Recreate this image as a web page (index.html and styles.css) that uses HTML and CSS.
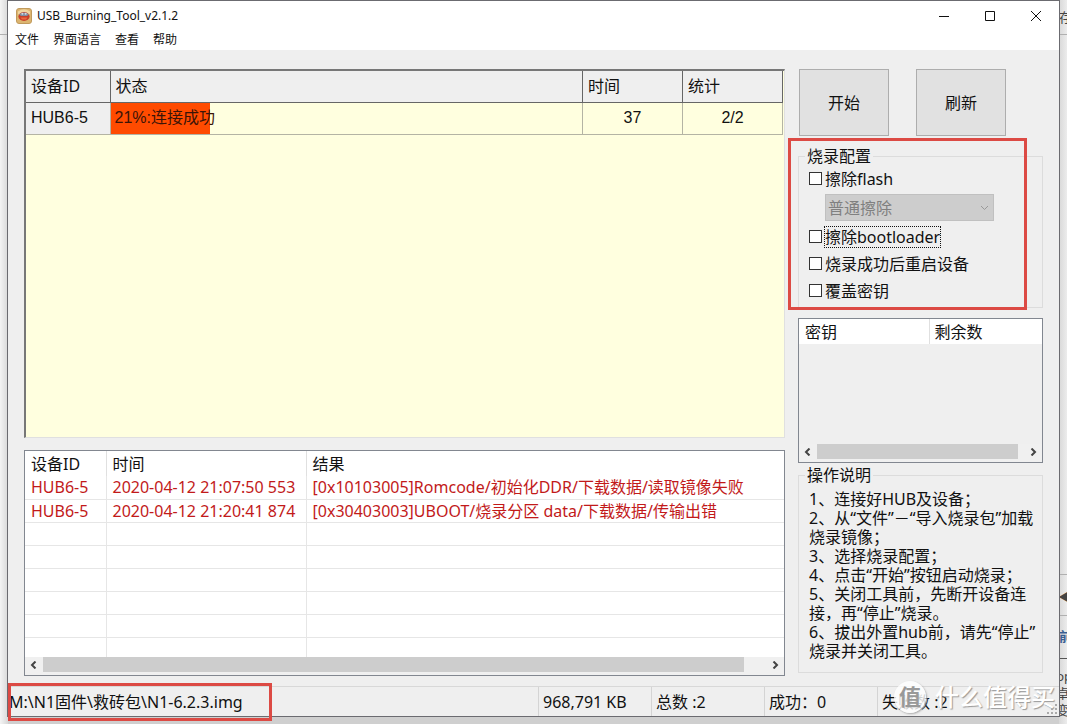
FILE: index.html
```html
<!DOCTYPE html>
<html lang="zh-CN">
<head>
<meta charset="utf-8">
<title>USB_Burning_Tool_v2.1.2</title>
<link rel="stylesheet" href="styles.css">
</head>
<body>
<div class="desktop" aria-hidden="true">
  <span class="bit bit-top">存戏</span>
  <span class="bit rule rule-left"></span>
  <span class="bit rule rule-right"></span>
  <span class="bit arrow-panel">◀</span>
  <span class="bit bit-link">前</span>
  <span class="bit rule rule-dark"></span>
  <span class="bit bit-app">op<br>卓<br>变</span>
  <span class="bit sheet"></span>
</div>

<div class="window">
  <header class="titlebar">
    <svg class="app-icon" viewBox="0 0 16 16" width="16" height="16">
      <rect x="0.5" y="0.5" width="15" height="15" rx="2.5" fill="#dcb570" stroke="#c09a5c"/>
      <path d="M2 3.5Q8 -1 14 3.5V6H2Z" fill="#f0d6a0"/>
      <ellipse cx="8" cy="8.5" rx="5.6" ry="4.4" fill="#c8402a"/>
      <path d="M3 6.5Q8 2.5 13 6.5L11 8H5Z" fill="#7e8fa3"/>
      <circle cx="6.4" cy="5.8" r="1" fill="#d4dbe0"/><circle cx="9.6" cy="5.8" r="1" fill="#d4dbe0"/>
      <path d="M4.5 9.5H11.5L10 11.5H6Z" fill="#ec6a40"/>
    </svg>
    <h1 class="title">USB_Burning_Tool_v2.1.2</h1>
    <button class="win-btn" aria-label="最小化"><svg viewBox="0 0 12 12" width="12" height="12"><path d="M1 6.5H11"/></svg></button>
    <button class="win-btn" aria-label="最大化"><svg viewBox="0 0 12 12" width="12" height="12"><path d="M1.5 1.5H10.5V10.5H1.5Z"/></svg></button>
    <button class="win-btn" aria-label="关闭"><svg viewBox="0 0 12 12" width="12" height="12"><path d="M1 1L11 11M11 1L1 11"/></svg></button>
  </header>
  <nav class="menu">
    <button>文件</button><button>界面语言</button><button>查看</button><button>帮助</button>
  </nav>

  <main class="content">
    <section class="left">
      <div class="devices">
        <table class="device-table">
          <colgroup><col class="c-id"><col><col class="c-num"><col class="c-num"></colgroup>
          <thead><tr><th>设备ID</th><th>状态</th><th>时间</th><th>统计</th></tr></thead>
          <tbody><tr>
            <td class="id">HUB6-5</td>
            <td class="progress"><div class="bar" style="width: 21%"></div><span class="status">21%:连接成功</span></td>
            <td class="num">37</td><td class="num">2/2</td>
          </tr></tbody>
        </table>
      </div>
      <div class="log">
        <table class="log-table">
          <colgroup><col class="l-id"><col class="l-time"><col></colgroup>
          <thead><tr><th>设备ID</th><th>时间</th><th>结果</th></tr></thead>
          <tbody>
            <tr><td>HUB6-5</td><td>2020-04-12 21:07:50 553</td><td>[0x10103005]Romcode/初始化DDR/下载数据/读取镜像失败</td></tr>
            <tr><td>HUB6-5</td><td>2020-04-12 21:20:41 874</td><td>[0x30403003]UBOOT/烧录分区 data/下载数据/传输出错</td></tr>
            <tr><td></td><td></td><td></td></tr>
            <tr><td></td><td></td><td></td></tr>
            <tr><td></td><td></td><td></td></tr>
            <tr><td></td><td></td><td></td></tr>
            <tr><td></td><td></td><td></td></tr>
            <tr class="last"><td></td><td></td><td></td></tr>
          </tbody>
        </table>
        <div class="scroll">
          <button aria-label="向左"><svg viewBox="0 0 8 8" width="8" height="8"><path d="M5.5 0.5L2 4L5.5 7.5"/></svg></button>
          <div class="track"><div class="thumb"></div></div>
          <button aria-label="向右"><svg viewBox="0 0 8 8" width="8" height="8"><path d="M2.5 0.5L6 4L2.5 7.5"/></svg></button>
        </div>
      </div>
    </section>

    <section class="right">
      <div class="actions"><button>开始</button><button>刷新</button></div>

      <div class="config">
        <fieldset class="group">
          <legend>烧录配置</legend>
          <label class="check"><input type="checkbox"><span>擦除flash</span></label>
          <select class="mode" disabled aria-label="擦除方式"><option>普通擦除</option></select>
          <label class="check"><input type="checkbox"><span class="focused">擦除bootloader</span></label>
          <label class="check"><input type="checkbox"><span>烧录成功后重启设备</span></label>
          <label class="check"><input type="checkbox"><span>覆盖密钥</span></label>
        </fieldset>
        <div class="mark mark-config"></div>
      </div>

      <div class="keys">
        <table class="key-table">
          <thead><tr><th>密钥</th><th>剩余数</th></tr></thead>
        </table>
        <div class="scroll">
          <button aria-label="向左"><svg viewBox="0 0 8 8" width="8" height="8"><path d="M5.5 0.5L2 4L5.5 7.5"/></svg></button>
          <div class="track"><div class="thumb"></div></div>
          <button aria-label="向右"><svg viewBox="0 0 8 8" width="8" height="8"><path d="M2.5 0.5L6 4L2.5 7.5"/></svg></button>
        </div>
      </div>

      <fieldset class="group help">
        <legend>操作说明</legend>
        <p>1、连接好HUB及设备；</p>
        <p>2、从“文件”－“导入烧录包”加载烧录镜像；</p>
        <p>3、选择烧录配置；</p>
        <p>4、点击“开始”按钮启动烧录；</p>
        <p>5、关闭工具前，先断开设备连接，再“停止”烧录。</p>
        <p>6、拔出外置hub前，请先“停止”烧录并关闭工具。</p>
      </fieldset>
    </section>
  </main>

  <footer class="statusbar">
    <span class="path">M:\N1固件\救砖包\N1-6.2.3.img</span>
    <span class="cell size">968,791 KB</span>
    <span class="cell">总数 :2</span>
    <span class="cell">成功：0</span>
    <span class="cell fail">失败数 :2</span>
    <div class="mark mark-path"></div>
    <svg class="grip" viewBox="0 0 10 10" width="10" height="10"><path d="M8 0h2v2H8zM4 4h2v2H4zM8 4h2v2H8zM0 8h2v2H0zM4 8h2v2H4zM8 8h2v2H8z" fill="#aaa"/></svg>
  </footer>
</div>

<div class="watermark"><span class="seal">值</span><span class="brand">什么值得买</span></div>
</body>
</html>
```

FILE: styles.css
```css
* { box-sizing: border-box; }

body {
  margin: 0;
  min-height: 100vh;
  overflow: hidden;
  position: relative;
  background: #e6e6e6;
  color: #111;
  font: 16px/20px "Noto Sans", "Noto Sans CJK SC", sans-serif;
}

button, select, input { font: inherit; color: inherit; margin: 0; }
button { border: 0; background: none; padding: 0; }
table { border-collapse: collapse; table-layout: fixed; width: 100%; }
th { font-weight: 400; text-align: left; }
th, td { padding: 0; white-space: nowrap; }

/* Desktop behind the window */
.desktop {
  position: absolute;
  inset: 0;
  overflow: hidden;
  background: linear-gradient(to right, #f4f4f4 0, #d8d8d8 8px, #d8d8d8 calc(100% - 8px), #ececec 100%);
}
.bit { position: absolute; color: #444; font-size: 13px; line-height: 20px; }
.bit-top { right: -18px; top: 7px; }
.rule { height: 1px; background: #b0b0b0; }
.rule-left { left: 0; top: 34px; width: 8px; }
.rule-right { right: 0; top: 34px; width: 8px; }
.rule-dark { right: 0; top: 658px; width: 8px; background: #555; }
.arrow-panel { right: -4px; top: 574px; height: 42px; line-height: 42px; border-block: 1px solid #b0b0b0; }
.bit-link { right: -5px; top: 626px; color: #3a5d92; font-weight: 700; }
.bit-app { right: -5px; top: 668px; line-height: 17px; }
.sheet { left: 8px; right: 8px; bottom: 0; height: 8px; background: #cfcfcf; }

/* Window frame */
.window {
  position: relative;
  display: flex;
  flex-direction: column;
  min-height: calc(100vh - 7px);
  margin: 0 7px 7px;
  border: 1px solid #6b6b70;
  background: #efefef;
}
.titlebar { display: flex; align-items: center; height: 29px; padding-left: 8px; background: #fff; }
.title { flex: 1; margin: 0 0 0 5px; font-size: 12px; line-height: 20px; font-weight: 400; }
.win-btn { display: grid; place-items: center; width: 46px; height: 29px; }
.win-btn svg { fill: none; stroke: #111; stroke-width: 1; }
.menu { display: flex; gap: 14px; height: 20px; padding-left: 7px; background: #fff; font-size: 12px; line-height: 20px; }

.content {
  flex: 1;
  display: grid;
  grid-template-columns: minmax(0, 1fr) 245px;
  gap: 13px;
  padding: 19px 16px 10px 16px;
}

.left { display: flex; flex-direction: column; gap: 12px; }
.devices { flex: 1; padding-right: 1px; border: 1px solid #777; border-width: 2px 1px 1px 2px; border-right-color: #e0e0e0; border-bottom-color: #e0e0e0; background: #ffffdf; }
.c-id { width: 84px; }
.c-num { width: 100px; }
.device-table th { height: 31px; padding-left: 5px; border: 1px solid #666; border-top: 0; background: #efefef; }
.device-table th:first-child, .device-table td:first-child { border-left: 0; }
.device-table td { height: 32px; border: 1px solid #b4b4a4; }
.device-table .id { padding-left: 5px; background: #efefef; font-family: "Liberation Sans", sans-serif; }
.device-table .num { text-align: center; font-family: "Liberation Sans", sans-serif; }
.device-table .progress { position: relative; }
.bar { height: 31px; background: #ff4b00; }
.status { position: absolute; left: 4px; top: 5px; font-family: "Liberation Sans", "Noto Sans CJK SC", sans-serif; color: #3a1408; }

.log { border: 1px solid #828790; background: #fff; }
.l-id { width: 81px; }
.l-time { width: 200px; }
.log-table th { height: 25px; padding-left: 6px; border-right: 1px solid #e0e0e0; }
.log-table td { height: 23px; padding-left: 6px; line-height: 20px; color: #c21a1a; border-right: 1px solid #e6e6e6; border-bottom: 1px solid #e6e6e6; }
.log-table th:last-child, .log-table td:last-child { border-right: 0; }
.log-table .last td { height: 20px; border-bottom: 0; }

.scroll { display: flex; height: 18px; padding-bottom: 2px; background: #f0f0f0; }
.scroll button { display: grid; place-items: center; width: 18px; height: 16px; }
.scroll svg { fill: none; stroke: #444; stroke-width: 2; }
.track { flex: 1; }
.thumb { width: 97%; height: 15px; background: #cdcdcd; }

.right { display: flex; flex-direction: column; }
.actions { display: flex; gap: 27px; padding: 0 1px; }
.actions button { width: 90px; height: 67px; border: 1px solid #adadad; background: #e1e1e1; }

.config { position: relative; margin-top: 11px; }
.group { min-width: 0; margin: 0; padding: 0 6px 3px 10px; border: 1px solid #dcdcdc; }
.group legend { margin-left: -4px; padding: 0 2px; line-height: 18px; }
.check { display: flex; align-items: center; gap: 3px; height: 27px; }
.check span { line-height: 20px; border: 1px dotted transparent; margin-left: -1px; }
.check .focused { border-color: #111; }
.check input { appearance: none; width: 13px; height: 13px; border: 1px solid #333; background: #fff; }
.mode {
  appearance: none;
  display: block;
  width: 169px;
  height: 27px;
  margin: 2px 0 2px 16px;
  padding: 0 2px;
  border: 1px solid #c0c0c0;
  border-radius: 0;
  color: #808080;
  opacity: 1;
  background: #cdcdcd url("data:image/svg+xml,%3Csvg xmlns='http://www.w3.org/2000/svg' width='9' height='6'%3E%3Cpath d='M1 1l3.5 3.5L8 1' fill='none' stroke='%23999'/%3E%3C/svg%3E") no-repeat right 4px center;
}

.mark { position: absolute; border: 3px solid #dc4a44; pointer-events: none; }
.mark-config { inset: -9px 16px -2px -10px; }
.mark-path { left: 0; top: -4px; width: 264px; height: 38px; }

.keys { display: flex; flex-direction: column; justify-content: space-between; height: 145px; margin-top: 10px; border: 1px solid #828790; }
.key-table th { height: 25px; padding-left: 6px; background: #fff; }
.key-table th + th { border-left: 1px solid #e0e0e0; padding-left: 5px; }
.key-table th:first-child { width: 130px; }

.help { flex: 1; margin: 3px 0; }
.help p { margin: 0; line-height: 19px; }
.help legend { margin-bottom: 6px; }

.statusbar { position: relative; display: flex; height: 30px; line-height: 30px; border-top: 1px solid #d8d8d8; white-space: nowrap; }
.path { flex: 1; padding-left: 1px; }
.cell { width: 113px; padding-left: 4px; border-left: 1px solid #d4d4d4; }
.fail { width: 182px; }
.grip { position: absolute; right: 2px; bottom: 2px; }

.watermark {
  position: absolute;
  right: 12px;
  bottom: 9px;
  display: flex;
  align-items: center;
  gap: 9px;
  color: #fff;
  line-height: 36px;
}
.seal { width: 32px; height: 32px; border-radius: 50%; background: rgba(255, 255, 255, 0.8); color: #999; font-size: 22px; line-height: 30px; text-align: center; font-weight: 700; box-shadow: 1px 1px 2px #aaa; }
.brand { font-size: 24px; font-weight: 500; text-shadow: 1px 1px 1px #999; }
```
